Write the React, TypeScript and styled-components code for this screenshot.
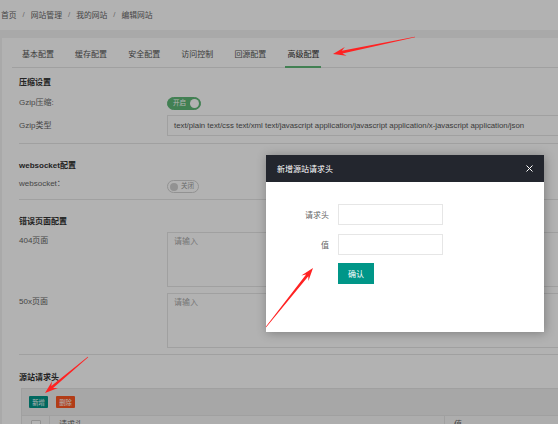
import React from 'react';
import styled, { createGlobalStyle } from 'styled-components';

const GlobalStyle = createGlobalStyle`
  html, body {
    margin: 0;
    padding: 0;
    overflow: hidden;
    background: #fff;
  }
  body {
    font-family: "Liberation Sans", "Noto Sans CJK SC", sans-serif;
    font-size: 8px;
    color: #333;
  }
  * { box-sizing: border-box; }
`;

const Page = styled.div`
  position: relative;
  width: 620px;
  height: 424px;
  overflow: hidden;
  background: #fff;
`;

const Breadcrumb = styled.div`
  height: 30px;
  display: flex;
  align-items: center;
  padding: 0 0 1px 1px;
  font-size: 7.8px;
  color: #666;
  background: #fff;
`;

const Sep = styled.span`
  margin: 0 6px;
  color: #999;
`;

const Body = styled.div`
  background: #f2f2f2;
  padding: 8px 0 0 2px;
  height: 394px;
`;

const Card = styled.div`
  background: #fff;
  height: 100%;
`;

const TabBar = styled.ul`
  list-style: none;
  margin: 0 0 0 10px;
  padding: 0 0 0 8px;
  height: 30px;
  display: flex;
  gap: 17.1px;
  border-bottom: 1px solid #e6e6e6;
`;

const Tab = styled.li<{ $active?: boolean }>`
  width: 36px;
  height: 30px;
  padding-top: 2px;
  display: flex;
  align-items: center;
  justify-content: center;
  color: ${p => (p.$active ? '#333' : '#555')};
  border-bottom: 2px solid ${p => (p.$active ? '#5FB878' : 'transparent')};
  margin-bottom: -1px;
`;

const Content = styled.div`
  padding: 0 0 0 17px;
`;

const SectionTitle = styled.div<{ $top: number }>`
  margin-top: ${p => p.$top}px;
  margin-bottom: 4px;
  height: 12px;
  line-height: 12px;
  font-weight: bold;
  color: #333;
`;

const Row = styled.div<{ $h: number; $gap?: number; $top?: boolean }>`
  display: flex;
  align-items: ${p => (p.$top ? 'flex-start' : 'center')};
  height: ${p => p.$h}px;
  margin-top: ${p => p.$gap ?? 0}px;
`;

const Label = styled.div<{ $pad?: number }>`
  width: 148px;
  flex: none;
  line-height: 12px;
  padding-top: ${p => p.$pad ?? 0}px;
  color: #666;
`;

const TextInput = styled.div`
  width: 430px;
  height: 21px;
  border: 1px solid #e6e6e6;
  background: #fff;
  padding-left: 6px;
  display: flex;
  align-items: center;
  font-size: 7.8px;
  color: #555;
  white-space: nowrap;
`;

const TextArea = styled.div`
  width: 430px;
  height: 55px;
  border: 1px solid #e6e6e6;
  background: #fff;
  padding: 3px 6px;
  line-height: 12px;
  color: #aaa;
`;

const Divider = styled.div<{ $top: number }>`
  margin-top: ${p => p.$top}px;
  border-top: 1px solid #e6e6e6;
`;

const SwitchSlot = styled.div<{ $offset?: number }>`
  padding-top: ${p => p.$offset ?? 0}px;
`;

const Switch = styled.div<{ $on?: boolean }>`
  display: flex;
  align-items: center;
  gap: 3px;
  width: ${p => (p.$on ? 34 : 32)}px;
  height: 13px;
  border-radius: 7px;
  padding: ${p => (p.$on ? '0 1px 0 5px' : '0 0 0 2px')};
  background: ${p => (p.$on ? '#5FB878' : '#fff')};
  border: 1px solid ${p => (p.$on ? '#5FB878' : '#d2d2d2')};
  font-size: 6.5px;
  line-height: 1;
  white-space: nowrap;
  color: ${p => (p.$on ? '#fff' : '#999')};
`;

const SwitchText = styled.span`
  flex: 1;
`;

const Knob = styled.i<{ $on?: boolean }>`
  display: block;
  width: ${p => (p.$on ? 9 : 8)}px;
  height: ${p => (p.$on ? 9 : 8)}px;
  border-radius: 50%;
  background: ${p => (p.$on ? '#fff' : '#d2d2d2')};
  flex: none;
`;

const Toolbar = styled.div`
  margin-left: 2px;
  height: 28px;
  border: 1px solid #e6e6e6;
  background: #f0f0f0;
  display: flex;
  align-items: center;
  gap: 8px;
  padding-left: 7px;
`;

const SmallBtn = styled.div<{ $color: string }>`
  width: 19px;
  height: 12px;
  background: ${p => p.$color};
  color: #fff;
  font-size: 6.3px;
  display: flex;
  align-items: center;
  justify-content: center;
  border-radius: 1px;
`;

const TableHead = styled.div`
  margin-left: 2px;
  height: 20px;
  display: flex;
  border: 1px solid #e6e6e6;
  border-top: none;
  background: #f8f8f8;
  color: #666;
`;

const Cell = styled.div<{ $w: number }>`
  width: ${p => p.$w}px;
  flex: none;
  border-right: 1px solid #e6e6e6;
  padding: 3px 0 0 9px;
  line-height: 12px;
`;

const Checkbox = styled.div`
  width: 10px;
  height: 10px;
  border: 1px solid #d2d2d2;
  background: #fff;
  border-radius: 1px;
  margin-top: 1px;
`;

const Shade = styled.div`
  position: absolute;
  inset: 0;
  background: rgba(0, 0, 0, 0.3);
`;

const Modal = styled.div`
  position: absolute;
  left: 266px;
  top: 155px;
  width: 278px;
  height: 177px;
  background: #fff;
  box-shadow: 1px 1px 10px rgba(0, 0, 0, 0.3);
  display: flex;
  flex-direction: column;
`;

const ModalHead = styled.div`
  height: 27px;
  background: #23262e;
  color: #fff;
  display: flex;
  align-items: center;
  justify-content: space-between;
  padding: 0 11px;
  font-size: 8px;
`;

const ModalBody = styled.div`
  padding-top: 22px;
  display: flex;
  flex-direction: column;
  gap: 9px;
`;

const ModalRow = styled.div`
  display: flex;
  align-items: center;
`;

const ModalLabel = styled.div`
  width: 72px;
  padding-right: 9px;
  text-align: right;
  color: #666;
`;

const ModalInput = styled.div`
  width: 105px;
  height: 21px;
  border: 1px solid #e6e6e6;
  background: #fff;
`;

const ConfirmBtn = styled.div`
  margin: -1px 0 0 72px;
  width: 36px;
  height: 21px;
  background: #009688;
  color: #fff;
  display: flex;
  align-items: center;
  justify-content: center;
`;

const Marks = styled.svg`
  position: absolute;
  left: 0;
  top: 0;
  pointer-events: none;
`;

function arrow(x1: number, y1: number, x2: number, y2: number) {
  const dx = x2 - x1;
  const dy = y2 - y1;
  const len = Math.hypot(dx, dy);
  const ux = dx / len;
  const uy = dy / len;
  const nx = -uy;
  const ny = ux;
  const H = 13;
  const W = 4.5;
  const w = 1.4;
  const pt = (x: number, y: number) => `${x.toFixed(1)},${y.toFixed(1)}`;
  const neckX = x2 - ux * H * 0.72;
  const neckY = y2 - uy * H * 0.72;
  const baseX = x2 - ux * H;
  const baseY = y2 - uy * H;
  return [
    pt(x1 + nx * 0.3, y1 + ny * 0.3),
    pt(neckX + nx * w, neckY + ny * w),
    pt(baseX + nx * W, baseY + ny * W),
    pt(x2, y2),
    pt(baseX - nx * W, baseY - ny * W),
    pt(neckX - nx * w, neckY - ny * w),
    pt(x1 - nx * 0.3, y1 - ny * 0.3),
  ].join(' ');
}

const tabs = ['基本配置', '缓存配置', '安全配置', '访问控制', '回源配置', '高级配置'];

export default function App() {
  return (
    <Page>
      <GlobalStyle />
      <Breadcrumb>
        <span>首页</span>
        <Sep>/</Sep>
        <span>网站管理</span>
        <Sep>/</Sep>
        <span>我的网站</span>
        <Sep>/</Sep>
        <span>编辑网站</span>
      </Breadcrumb>
      <Body>
        <Card>
          <TabBar>
            {tabs.map((t, i) => (
              <Tab key={t} $active={i === tabs.length - 1}>
                {t}
              </Tab>
            ))}
          </TabBar>
          <Content>
            <SectionTitle $top={9}>压缩设置</SectionTitle>
            <Row $h={20}>
              <Label>Gzip压缩:</Label>
              <Switch $on>
                <SwitchText>开启</SwitchText>
                <Knob $on />
              </Switch>
            </Row>
            <Row $h={21} $gap={2}>
              <Label>Gzip类型</Label>
              <TextInput>
                text/plain text/css text/xml text/javascript application/javascript application/x-javascript
                application/json
              </TextInput>
            </Row>
            <Divider $top={7} />

            <SectionTitle $top={16}>websocket配置</SectionTitle>
            <Row $h={20} $top>
              <Label $pad={2}>websocket：</Label>
              <SwitchSlot $offset={4}>
                <Switch>
                  <Knob />
                  <SwitchText>关闭</SwitchText>
                </Switch>
              </SwitchSlot>
            </Row>
            <Divider $top={3} />

            <SectionTitle $top={16}>错误页面配置</SectionTitle>
            <Row $h={55} $top>
              <Label $pad={3}>404页面</Label>
              <TextArea>请输入</TextArea>
            </Row>
            <Row $h={55} $gap={6} $top>
              <Label $pad={3}>50x页面</Label>
              <TextArea>请输入</TextArea>
            </Row>
            <Divider $top={6} />

            <SectionTitle $top={17}>源站请求头</SectionTitle>
            <Toolbar>
              <SmallBtn $color="#009688">新增</SmallBtn>
              <SmallBtn $color="#FF5722">删除</SmallBtn>
            </Toolbar>
            <TableHead>
              <Cell $w={28}>
                <Checkbox />
              </Cell>
              <Cell $w={395}>请求头</Cell>
              <Cell $w={160}>值</Cell>
            </TableHead>
          </Content>
        </Card>
      </Body>

      <Shade />

      <Modal>
        <ModalHead>
          <span>新增源站请求头</span>
          <svg width="7" height="7" viewBox="0 0 7 7">
            <path d="M0.5 0.5 L6.5 6.5 M6.5 0.5 L0.5 6.5" stroke="#fff" strokeWidth="1" />
          </svg>
        </ModalHead>
        <ModalBody>
          <ModalRow>
            <ModalLabel>请求头</ModalLabel>
            <ModalInput />
          </ModalRow>
          <ModalRow>
            <ModalLabel>值</ModalLabel>
            <ModalInput />
          </ModalRow>
          <ConfirmBtn>确认</ConfirmBtn>
        </ModalBody>
      </Modal>

      <Marks width="558" height="424" viewBox="0 0 558 424">
        <polygon points={arrow(415, 37, 333, 54)} fill="#f22" />
        <polygon points={arrow(266, 327, 313, 268)} fill="#f22" />
        <polygon points={arrow(88, 357, 45, 393)} fill="#f22" />
      </Marks>
    </Page>
  );
}
